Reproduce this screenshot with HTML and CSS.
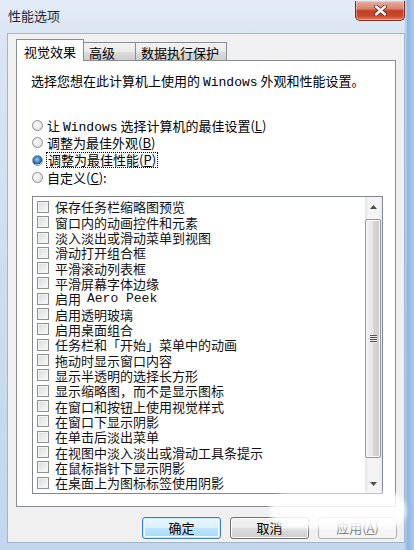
FILE: index.html
```html
<!DOCTYPE html>
<html lang="zh-CN">
<head>
  <meta charset="UTF-8" />
  <meta name="viewport" content="width=device-width, initial-scale=1.0"/>
  <title>性能选项</title>
  <link rel="stylesheet" href="styles.css">
</head>
<body>

  <div class="window">

    <!-- Title bar -->
    <div class="titlebar">
      <span class="title">性能选项</span>
      <div class="close-btn">
        <svg width="13" height="11" viewBox="0 0 13 11">
          <path d="M2 1.5 L11 9.5 M11 1.5 L2 9.5" stroke="#5a2418" stroke-width="4" stroke-linecap="round"/>
          <path d="M2 1.5 L11 9.5 M11 1.5 L2 9.5" stroke="#fff" stroke-width="2.4" stroke-linecap="round"/>
        </svg>
      </div>
    </div>

    <div class="client">

      <!-- Tabs -->
      <div class="tabs">
        <div class="tab active">视觉效果</div>
        <div class="tab tab-adv">高级</div>
        <div class="tab tab-dep">数据执行保护</div>
      </div>

      <div class="panel">
        <p class="intro">选择您想在此计算机上使用的 <span class="latin">Windows</span> 外观和性能设置。</p>

        <div class="radios">
          <div class="radio-row"><span class="radio"></span><span>让 <span class="latin">Windows</span> 选择计算机的最佳设置(<u>L</u>)</span></div>
          <div class="radio-row"><span class="radio"></span><span>调整为最佳外观(<u>B</u>)</span></div>
          <div class="radio-row"><span class="radio checked"></span><span class="focus">调整为最佳性能(<u>P</u>)</span></div>
          <div class="radio-row"><span class="radio"></span><span>自定义(<u>C</u>):</span></div>
        </div>

        <div class="listbox">
          <ul class="list">
            <li><span class="check"></span>保存任务栏缩略图预览</li>
            <li><span class="check"></span>窗口内的动画控件和元素</li>
            <li><span class="check"></span>淡入淡出或滑动菜单到视图</li>
            <li><span class="check"></span>滑动打开组合框</li>
            <li><span class="check"></span>平滑滚动列表框</li>
            <li><span class="check"></span>平滑屏幕字体边缘</li>
            <li><span class="check"></span>启用 <span class="latin">Aero Peek</span></li>
            <li><span class="check"></span>启用透明玻璃</li>
            <li><span class="check"></span>启用桌面组合</li>
            <li><span class="check"></span>任务栏和「开始」菜单中的动画</li>
            <li><span class="check"></span>拖动时显示窗口内容</li>
            <li><span class="check"></span>显示半透明的选择长方形</li>
            <li><span class="check"></span>显示缩略图，而不是显示图标</li>
            <li><span class="check"></span>在窗口和按钮上使用视觉样式</li>
            <li><span class="check"></span>在窗口下显示阴影</li>
            <li><span class="check"></span>在单击后淡出菜单</li>
            <li><span class="check"></span>在视图中淡入淡出或滑动工具条提示</li>
            <li><span class="check"></span>在鼠标指针下显示阴影</li>
            <li><span class="check"></span>在桌面上为图标标签使用阴影</li>
          </ul>

          <div class="scrollbar">
            <div class="sb-arrow">
              <svg width="7" height="4" viewBox="0 0 7 4"><polygon points="0,4 3.5,0 7,4" fill="#4b4b4b"/></svg>
            </div>
            <div class="sb-thumb">
              <span class="grip"></span><span class="grip"></span><span class="grip"></span><span class="grip"></span>
            </div>
            <div class="sb-space"></div>
            <div class="sb-arrow">
              <svg width="7" height="4" viewBox="0 0 7 4"><polygon points="0,0 7,0 3.5,4" fill="#4b4b4b"/></svg>
            </div>
          </div>
        </div>
      </div>

      <!-- Dialog buttons -->
      <div class="buttons">
        <button class="btn default">确定</button>
        <button class="btn">取消</button>
        <button class="btn disabled">应用(<u>A</u>)</button>
      </div>
    </div>

    <div class="watermark"></div>
  </div>

</body>
</html>
```

FILE: styles.css
```css
* { margin: 0; padding: 0; box-sizing: border-box; }

body {
  width: 414px;
  height: 550px;
  overflow: hidden;
  font-family: "Noto Sans CJK SC", "Liberation Sans", sans-serif;
  font-size: 13px;
  color: #000;
  background: #c6d9ee;
}

.latin {
  font-family: "Liberation Mono", "DejaVu Sans Mono", monospace;
  font-size: 13px;
}

u { text-decoration: underline; text-underline-offset: 1px; }

/* glass frame */
.window {
  position: relative;
  width: 414px;
  height: 550px;
  background:
    linear-gradient(to right, rgba(0,0,0,0) 97.5%, #8fb6e2 98.5%, #a9c9ee 100%),
    linear-gradient(to bottom, #e3ecf6 0%, #d9e5f3 8%, #cbdcef 60%, #c2d6ee 100%);
}

.titlebar {
  height: 33px;
  display: flex;
  justify-content: space-between;
  align-items: flex-start;
  padding: 0 9px 0 8px;
}

.title {
  line-height: 32px;
  font-size: 13px;
  color: #1e2a3a;
}

.close-btn {
  width: 50px;
  height: 20px;
  margin-top: 1px;
  border: 1px solid #7a3020;
  border-top: none;
  border-radius: 0 0 5px 5px;
  background: linear-gradient(to bottom, #e8b0a2 0%, #d98470 40%, #c43f24 52%, #c9482d 80%, #e07f63 100%);
  box-shadow: inset 0 0 0 1px rgba(255,255,255,0.35);
  display: flex;
  align-items: center;
  justify-content: center;
}

.client {
  margin-left: 7px;
  width: 398px;
  height: 510px;
  background: #f0f0f0;
  border: 1px solid #a5b5c8;
  padding: 5px 8px 0 8px;
}

/* tab strip */
.tabs {
  display: flex;
  align-items: flex-start;
  height: 22px;
  margin-bottom: -1px;
  position: relative;
  z-index: 1;
}

.tab {
  height: 18px;
  margin-top: 3px;
  margin-left: -1px;
  padding: 2px 0 0 5px;
  line-height: 16px;
  border: 1px solid #898c95;
  border-bottom: none;
  background: linear-gradient(to bottom, #f2f2f2 0%, #ebebeb 50%, #dddddd 50%, #cfcfcf 100%);
  white-space: nowrap;
}

.tab.active {
  width: 68px;
  height: 22px;
  margin-top: 0;
  margin-left: 0;
  padding: 4px 0 0 0;
  text-align: center;
  background: #fff;
  position: relative;
  z-index: 2;
}

.tab-adv { width: 53px; }
.tab-dep { width: 92px; }

.panel {
  width: 380px;
  height: 447px;
  background: #fff;
  border: 1px solid #898c95;
  padding: 0 12px 0 15px;
}

.intro {
  margin: 12px 0 0 -1px;
  line-height: 15px;
  white-space: nowrap;
}

.radios { margin-top: 27px; }

.radio-row {
  height: 17.3px;
  display: flex;
  align-items: center;
  gap: 4px;
  white-space: nowrap;
}

.radio {
  width: 11px;
  height: 11px;
  border-radius: 50%;
  border: 1px solid #8e8f8f;
  background: radial-gradient(circle at 40% 40%, #fcfcfc 0%, #e8e8e8 55%, #d4d4d4 100%);
  flex: none;
}

.radio.checked {
  background:
    radial-gradient(circle at 45% 40%, #9fd2f5 0%, #2a7cc4 45%, #174f86 65%, rgba(0,0,0,0) 68%),
    radial-gradient(circle, #f4f4f4 0%, #dedede 100%);
}

.focus {
  border: 1px dotted #000;
  padding: 0 1px;
  margin-left: -1px;
  line-height: 14px;
}

/* checkbox list */
.listbox {
  margin-top: 10px;
  width: 351px;
  height: 298px;
  border: 1px solid #828790;
  display: flex;
}

.list {
  flex: 1;
  list-style: none;
  padding: 2px 0 0 4px;
  overflow: hidden;
}

.list li {
  height: 15.33px;
  display: flex;
  align-items: center;
  gap: 6px;
  white-space: nowrap;
  line-height: 15px;
  color: #111;
}

.check {
  width: 12px;
  height: 12px;
  border: 1px solid #8f8f8f;
  background: linear-gradient(135deg, #d9d9d9 0%, #ececec 55%, #fafafa 100%);
  box-shadow: inset 0 0 0 1px #f4f4f4;
  flex: none;
}

.scrollbar {
  width: 17px;
  display: flex;
  flex-direction: column;
  background: linear-gradient(to right, #e4e4e4 0%, #f4f4f4 20%, #f4f4f4 80%, #ebebeb 100%);
}

.sb-arrow {
  height: 19px;
  display: flex;
  align-items: center;
  justify-content: center;
}

.sb-thumb {
  height: 239px;
  margin: 3px 1px 0 0;
  border: 1px solid #979797;
  border-radius: 2px;
  background: linear-gradient(to right, #f1f1f1 0%, #e6e6e6 45%, #d6d6d6 55%, #cdcdcd 100%);
  box-shadow: inset 0 0 0 1px #f8f8f8;
  display: flex;
  flex-direction: column;
  align-items: center;
  justify-content: center;
  gap: 1px;
}

.grip {
  width: 7px;
  height: 1px;
  background: #545454;
  box-shadow: 0 1px 0 #e8e8e8;
}

.sb-space { flex: 1; }

/* OK / Cancel / Apply */
.buttons {
  display: flex;
  justify-content: flex-end;
  gap: 9px;
  margin: 10px -1px 0 0;
}

.btn {
  width: 79px;
  height: 22px;
  font-family: inherit;
  font-size: 13px;
  line-height: 18px;
  color: #000;
  border: 1px solid #707070;
  border-radius: 3px;
  background: linear-gradient(to bottom, #f2f2f2 0%, #ebebeb 50%, #dddddd 50%, #cfcfcf 100%);
  box-shadow: inset 0 0 0 1px #fbfbfb;
}

.btn.default {
  border-color: #3c7fb1;
  background: linear-gradient(to bottom, #eaf6fd 0%, #d9f0fc 50%, #bee6fd 50%, #a7d9f5 100%);
  box-shadow: inset 0 0 0 1px #c4e9fc, inset 0 0 0 2px #eef8fe;
}

.btn.disabled {
  border-color: #adb2b5;
  background: #f4f4f4;
  color: #838383;
  box-shadow: none;
}

/* white smudge over the lower right corner */
.watermark {
  position: absolute;
  left: 270px;
  top: 493px;
  width: 136px;
  height: 35px;
  border-radius: 17px;
  background: rgba(255, 255, 255, 0.85);
  filter: blur(2px);
}
```
